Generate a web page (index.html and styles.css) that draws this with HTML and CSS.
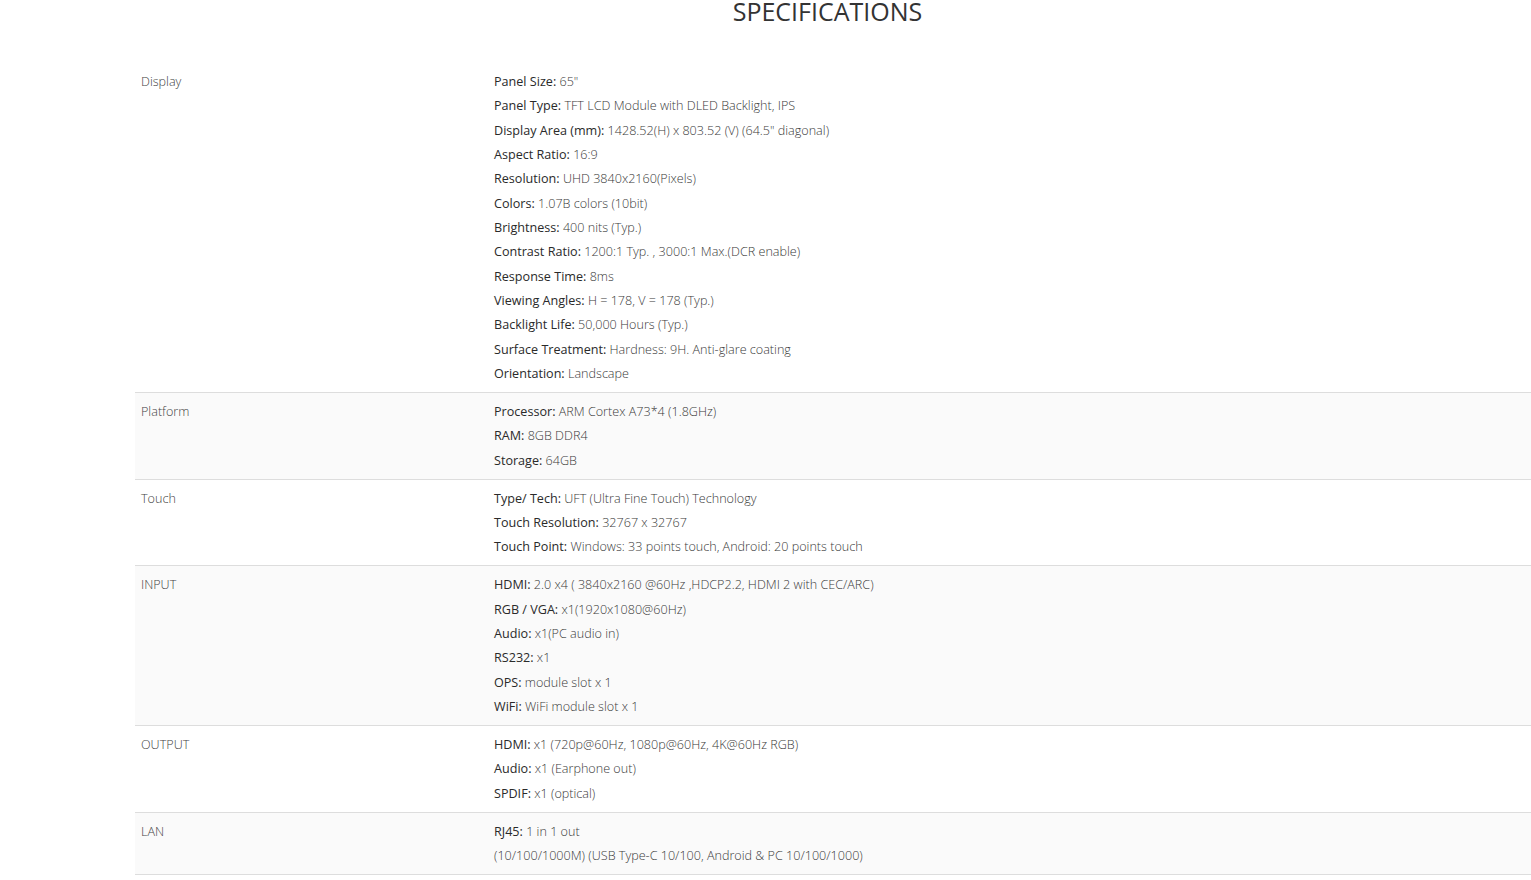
FILE: index.html
```html
<!DOCTYPE html>
<html>
<head>
<meta charset="utf-8">
<link rel="stylesheet" href="styles.css">
</head>
<body>
<div class="container">
  <h2 class="title">SPECIFICATIONS</h2>
  <table class="specs">
    <tr>
      <td class="label">Display</td>
      <td class="values">
        <div><b>Panel Size:</b> 65"</div>
        <div><b>Panel Type:</b> TFT LCD Module with DLED Backlight, IPS</div>
        <div><b>Display Area (mm):</b> 1428.52(H) x 803.52 (V) (64.5" diagonal)</div>
        <div><b>Aspect Ratio:</b> 16:9</div>
        <div><b>Resolution:</b> UHD 3840x2160(Pixels)</div>
        <div><b>Colors:</b> 1.07B colors (10bit)</div>
        <div><b>Brightness:</b> 400 nits (Typ.)</div>
        <div><b>Contrast Ratio:</b> 1200:1 Typ. , 3000:1 Max.(DCR enable)</div>
        <div><b>Response Time:</b> 8ms</div>
        <div><b>Viewing Angles:</b> H = 178, V = 178 (Typ.)</div>
        <div><b>Backlight Life:</b> 50,000 Hours (Typ.)</div>
        <div><b>Surface Treatment:</b> Hardness: 9H. Anti-glare coating</div>
        <div><b>Orientation:</b> Landscape</div>
      </td>
    </tr>
    <tr>
      <td class="label">Platform</td>
      <td class="values">
        <div><b>Processor:</b> ARM Cortex A73*4 (1.8GHz)</div>
        <div><b>RAM:</b> 8GB DDR4</div>
        <div><b>Storage:</b> 64GB</div>
      </td>
    </tr>
    <tr>
      <td class="label">Touch</td>
      <td class="values">
        <div><b>Type/ Tech:</b> UFT (Ultra Fine Touch) Technology</div>
        <div><b>Touch Resolution:</b> 32767 x 32767</div>
        <div><b>Touch Point:</b> Windows: 33 points touch, Android: 20 points touch</div>
      </td>
    </tr>
    <tr>
      <td class="label">INPUT</td>
      <td class="values">
        <div><b>HDMI:</b> 2.0 x4 ( 3840x2160 @60Hz ,HDCP2.2, HDMI 2 with CEC/ARC)</div>
        <div><b>RGB / VGA:</b> x1(1920x1080@60Hz)</div>
        <div><b>Audio:</b> x1(PC audio in)</div>
        <div><b>RS232:</b> x1</div>
        <div><b>OPS:</b> module slot x 1</div>
        <div><b>WiFi:</b> WiFi module slot x 1</div>
      </td>
    </tr>
    <tr>
      <td class="label">OUTPUT</td>
      <td class="values">
        <div><b>HDMI:</b> x1 (720p@60Hz, 1080p@60Hz, 4K@60Hz RGB)</div>
        <div><b>Audio:</b> x1 (Earphone out)</div>
        <div><b>SPDIF:</b> x1 (optical)</div>
      </td>
    </tr>
    <tr>
      <td class="label">LAN</td>
      <td class="values">
        <div><b>RJ45:</b> 1 in 1 out</div>
        <div>(10/100/1000M) (USB Type-C 10/100, Android &amp; PC 10/100/1000)</div>
      </td>
    </tr>
  </table>
</div>
</body>
</html>
```

FILE: styles.css
```css
html, body {
  margin: 0;
  padding: 0;
  overflow-x: hidden;
  background: #fff;
}
body {
  font-family: "Open Sans", "Liberation Sans", sans-serif;
  color: #444;
}
.container {
  width: 1385px;
  margin-left: 135px;
}
.title {
  margin: 0;
  height: 64px;
  text-align: center;
  font-size: 25px;
  font-weight: 400;
  color: #333;
  line-height: 24px;
  margin-top: -1px;
}
.specs {
  width: 1400px;
  border-collapse: collapse;
  font-size: 12.6px;
}
.specs td {
  vertical-align: top;
  padding: 7px 5px 5.7px 5px;
  line-height: 24.33px;
}
.specs tr + tr td {
  border-top: 1px solid #ddd;
}
.specs tr:last-child td {
  border-bottom: 1px solid #ddd;
}
.specs tr:nth-child(even) td {
  background: #fafafa;
}
.specs td.label {
  width: 343px;
  padding-left: 6px;
  font-weight: 300;
  color: #444;
}
.values {
  font-weight: 300;
  color: #3a3a3a;
}
.values b {
  font-weight: 400;
  color: #2a2a2a;
}
```
